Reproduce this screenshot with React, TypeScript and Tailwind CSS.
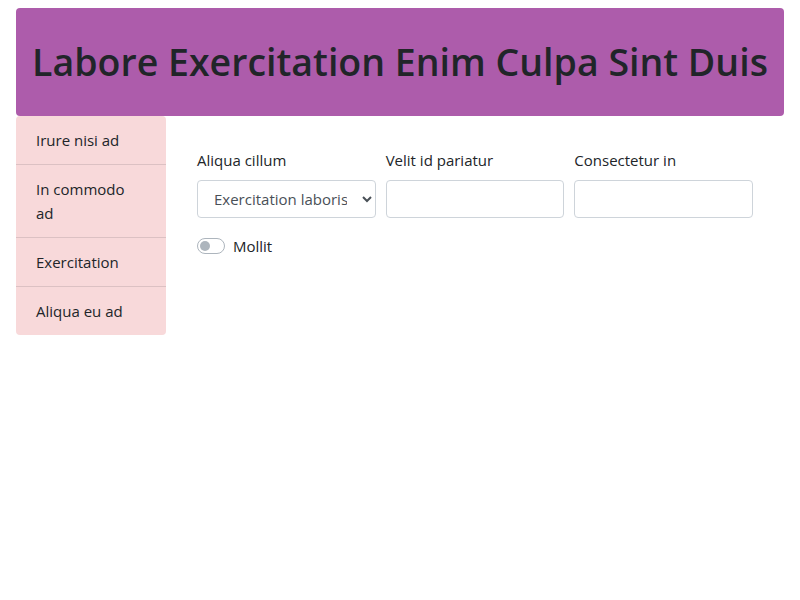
import React from 'react';

const navItems = ['Irure nisi ad', 'In commodo ad', 'Exercitation', 'Aliqua eu ad'];

export default function App() {
  return (
    <div className="min-h-[600px] bg-white px-4 pt-2 text-[15px] text-[#212529]" style={{ fontFamily: '"Open Sans", "Noto Sans", sans-serif' }}>
      <header className="rounded bg-[#ad5cab] py-[30px] text-center">
        <h1 className="text-[37.5px] font-semibold leading-[48px]">Labore Exercitation Enim Culpa Sint Duis</h1>
      </header>

      <div className="flex items-start">
        <nav className="w-[150px] shrink-0 overflow-hidden rounded bg-[#f8d9da]">
          {navItems.map((item, i) => (
            <div key={item} className={`py-3 pl-5 pr-6 leading-6 ${i > 0 ? 'border-t border-[#dcc1c3]' : ''}`}>
              {item}
            </div>
          ))}
        </nav>

        <main className="flex-1 px-[31px] pt-8">
          <div className="grid grid-cols-3 gap-[10px]">
            <label className="flex flex-col">
              <span className="mb-2 leading-6">Aliqua cillum</span>
              <select className="h-[38px] rounded border border-[#ced4da] bg-white px-3 text-[#495057]">
                <option>Exercitation laboris</option>
              </select>
            </label>
            <label className="flex flex-col">
              <span className="mb-2 leading-6">Velit id pariatur</span>
              <input className="h-[38px] rounded border border-[#ced4da] px-3" />
            </label>
            <label className="flex flex-col">
              <span className="mb-2 leading-6">Consectetur in</span>
              <input className="h-[38px] rounded border border-[#ced4da] px-3" />
            </label>
          </div>

          <div className="mt-4 flex items-center gap-2">
            <span className="relative inline-block h-4 w-7 rounded-full border border-[#adb5bd] bg-white">
              <span className="absolute left-[2px] top-[2px] h-[10px] w-[10px] rounded-full bg-[#adb5bd]" />
            </span>
            <span className="leading-6">Mollit</span>
          </div>
        </main>
      </div>
    </div>
  );
}
